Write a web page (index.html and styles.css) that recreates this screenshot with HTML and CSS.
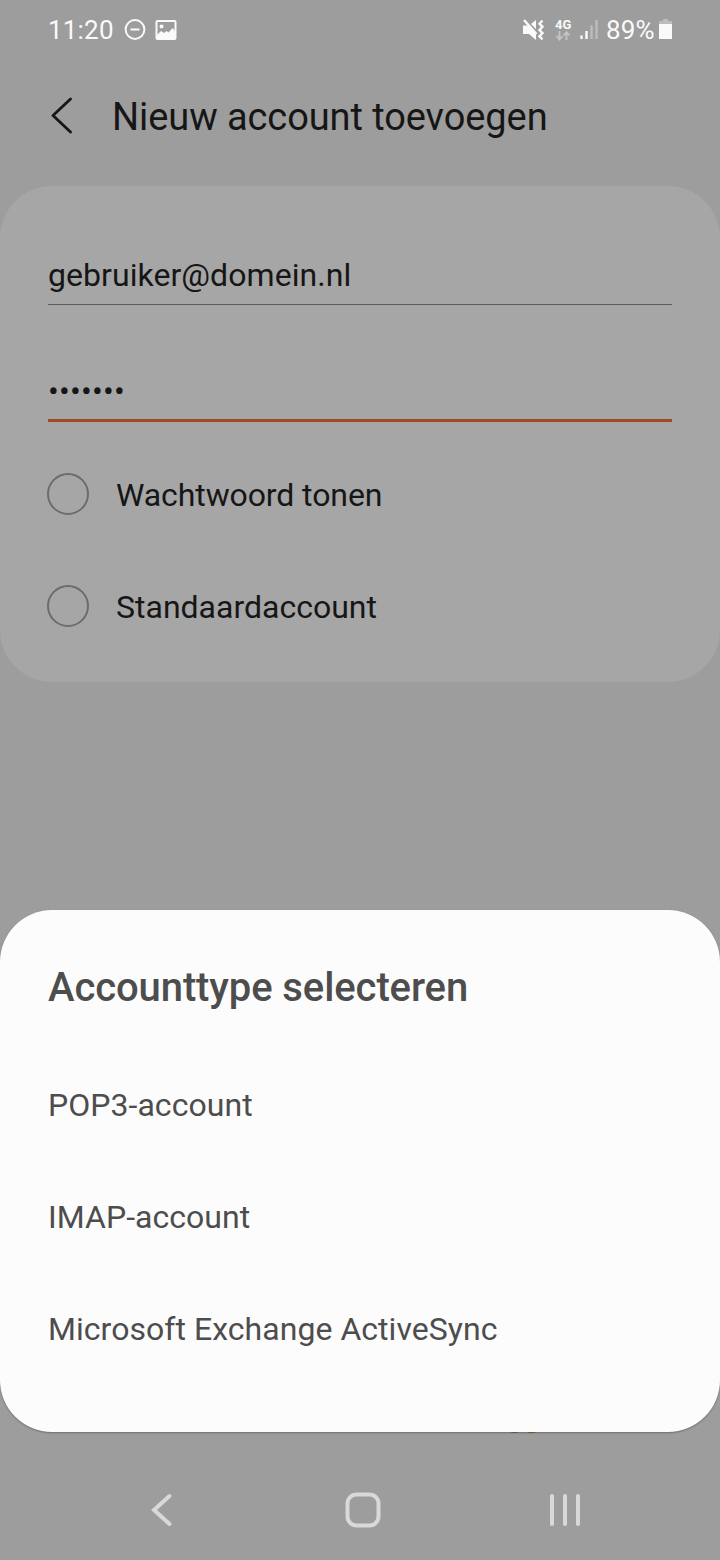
FILE: index.html
```html
<!DOCTYPE html>
<html lang="nl">
<head>
    <meta charset="UTF-8">
    <meta name="viewport" content="width=device-width, initial-scale=1.0">
    <title>Nieuw account toevoegen</title>
    <link rel="stylesheet" href="styles.css">
</head>
<body>
    <div class="status-bar">
        <span class="clock">11:20</span>
        <svg class="icon-dnd" width="22" height="22" viewBox="0 0 22 22">
            <circle cx="11" cy="10.500" r="9.4"/>
            <path d="M6.5 10.500h9"/>
        </svg>
        <svg class="icon-image" width="22" height="20" viewBox="0 0 22 20">
            <rect x="1.5" y="1" width="19" height="18" rx="1"/>
            <path d="M2 15l4-4 3 2 2.500-2 2 1.500 4-4.500L20 11v8H2z"/>
            <circle cx="6.500" cy="6.500" r="2"/>
        </svg>
        <div class="status-right">
            <svg class="icon-mute" width="24" height="24" viewBox="0 0 24 24">
                <path class="fill" d="M0 7.500h5L13 15v7L6 16H0zM8 6l5-4v9z"/>
                <path d="M1 2l12.500 14"/>
                <path d="M19.500 2.500l-3 3.200 3 3.100-3 3.200 3 3.100-3 3.200 3 3"/>
            </svg>
            <div class="network">
                <span>4G</span>
                <svg width="16" height="10" viewBox="0 0 16 10">
                    <path d="M4.500 0v8M1.500 5l3 3.500 3-3.500M11.500 9V1M8.500 4.500l3-3.500 3 3.500"/>
                </svg>
            </div>
            <svg class="icon-signal" width="20" height="20" viewBox="0 0 20 20">
                <path d="M1.500 15.500v3.500M6.500 11v8"/>
                <path class="dim" d="M11.500 5.500V19M16.500 0v19"/>
            </svg>
            <span class="percent">89%</span>
            <svg class="icon-battery" width="14" height="22" viewBox="0 0 14 22">
                <path class="dim" d="M4 0h5v2h4v3H0V2h4z"/>
                <path d="M0 5h13v15H0z"/>
            </svg>
        </div>
    </div>

    <header class="header">
        <svg class="back" width="24" height="40" viewBox="0 0 24 40">
            <path d="M22.500 2L5 18.500 22.500 35"/>
        </svg>
        <h1>Nieuw account toevoegen</h1>
    </header>

    <main class="card">
        <div class="field">gebruiker@domein.nl</div>
        <div class="field active">•••••••</div>
        <div class="option"><span class="radio"></span><span class="show">Wachtwoord tonen</span></div>
        <div class="option"><span class="radio"></span><span>Standaardaccount</span></div>
    </main>

    <section class="sheet">
        <h2>Accounttype selecteren</h2>
        <ul>
            <li>POP3-account</li>
            <li>IMAP-account</li>
            <li>Microsoft Exchange ActiveSync</li>
        </ul>
        <!-- button behind the sheet, only its lower edge sticks out -->
        <svg class="peek" width="30" height="2" viewBox="0 0 30 2">
            <path d="M2 0h9l-2 1H4zM19 0h9l-2 1h-5z"/>
        </svg>
    </section>

    <nav class="nav-bar">
        <svg width="24" height="40" viewBox="0 0 24 40">
            <path d="M20.500 6L5 20l15.500 14"/>
        </svg>
        <svg class="home" width="40" height="40" viewBox="0 0 40 40">
            <rect x="4.500" y="4.500" width="31" height="31" rx="9"/>
        </svg>
        <svg width="36" height="40" viewBox="0 0 36 40">
            <path d="M5 6v28M18 6v28M31 6v28"/>
        </svg>
    </nav>
</body>
</html>
```

FILE: styles.css
```css
* {
    box-sizing: border-box;
}

body {
    margin: 0;
    height: 1560px;
    background: #9d9d9d;
    color: #161616;
    font-family: Roboto, sans-serif;
    font-size: 32px;
    display: flex;
    flex-direction: column;
    overflow: hidden;
}

h1, h2, ul {
    margin: 0;
    padding: 0;
}

svg {
    display: block;
    fill: none;
    flex-shrink: 0;
}

.status-bar {
    height: 60px;
    padding: 0 47px 0 48px;
    display: flex;
    align-items: center;
    color: #fafafa;
    font-size: 26px;
}

.status-bar svg {
    stroke: #fafafa;
}

.clock {
    width: 76px;
    letter-spacing: 0.2px;
}

.icon-dnd {
    stroke-width: 2;
}

.icon-image {
    margin-left: 9px;
}

.status-bar .icon-image {
    stroke-width: 2;
}

.icon-image path,
.icon-image circle {
    fill: #fafafa;
    stroke: none;
}

.status-right {
    margin-left: auto;
    display: flex;
    align-items: center;
}

.icon-mute {
    stroke-width: 2.4;
}

.icon-mute .fill {
    fill: #fafafa;
    stroke: none;
}

.network {
    width: 18px;
    margin: 0 7px 0 8px;
    font-size: 13px;
    font-weight: 700;
    line-height: 12px;
}

.network span {
    display: block;
}

.status-bar .network svg {
    stroke: #c4c4c4;
    stroke-width: 1.8;
}

.icon-signal {
    stroke-width: 2.4;
}

.status-bar .dim {
    stroke: #bcbcbc;
}

.percent {
    margin-left: 6px;
    width: 53px;
    letter-spacing: 0.2px;
}

.status-bar .icon-battery {
    fill: #fafafa;
    stroke: none;
}

.status-bar .icon-battery .dim {
    fill: #bcbcbc;
    stroke: none;
}

.header {
    height: 126px;
    padding: 0 48px 13px;
    display: flex;
    align-items: center;
}

.back {
    stroke: #161616;
    stroke-width: 2.8;
    stroke-linecap: round;
    stroke-linejoin: round;
}

.header h1 {
    margin-left: 40px;
    font-size: 38px;
    font-weight: 400;
    letter-spacing: -0.08px;
}

.card {
    height: 496px;
    padding: 58px 48px 0;
    background: #a6a6a6;
    border-radius: 52px;
}

.field {
    height: 61px;
    padding-top: 1px;
    line-height: 61px;
    letter-spacing: 0.05px;
    border-bottom: 1px solid #5c5c5c;
}

.field.active {
    height: 58px;
    margin-top: 59px;
    padding-top: 0;
    line-height: 54px;
    letter-spacing: 0.22px;
    border-bottom: 3px solid #a04a2c;
}

.option {
    height: 112px;
    display: flex;
    align-items: center;
}

.option span:last-child {
    padding-top: 2px;
}

.option .show {
    letter-spacing: -0.1px;
}

.active + .option {
    margin-top: 16px;
}

.radio {
    width: 42px;
    height: 42px;
    margin: 0 27px 0 -1px;
    border: 2px solid #6c6c6c;
    border-radius: 50%;
}

.sheet {
    position: relative;
    height: 522px;
    margin-top: 228px;
    padding: 51px 48px 0;
    background: #fcfcfc;
    border-radius: 52px;
    box-shadow: 0 1px 2px rgba(0, 0, 0, 0.3);
    color: #4d4d4d;
}

.sheet h2 {
    font-size: 40px;
    font-weight: 500;
    line-height: 54px;
    letter-spacing: -0.1px;
    margin-bottom: 34px;
}

.sheet ul {
    list-style: none;
}

.sheet li {
    height: 112px;
    line-height: 112px;
    letter-spacing: 0.04px;
}

.peek {
    position: absolute;
    left: 508px;
    bottom: -2px;
    fill: #7d5230;
}

.nav-bar {
    height: 128px;
    padding: 28px 137px 0 149px;
    display: flex;
    align-items: center;
    justify-content: space-between;
}

.nav-bar svg {
    stroke: #d9d9d9;
    stroke-width: 4;
    stroke-linecap: round;
}

.nav-bar .home {
    margin-left: 6px;
}
```
